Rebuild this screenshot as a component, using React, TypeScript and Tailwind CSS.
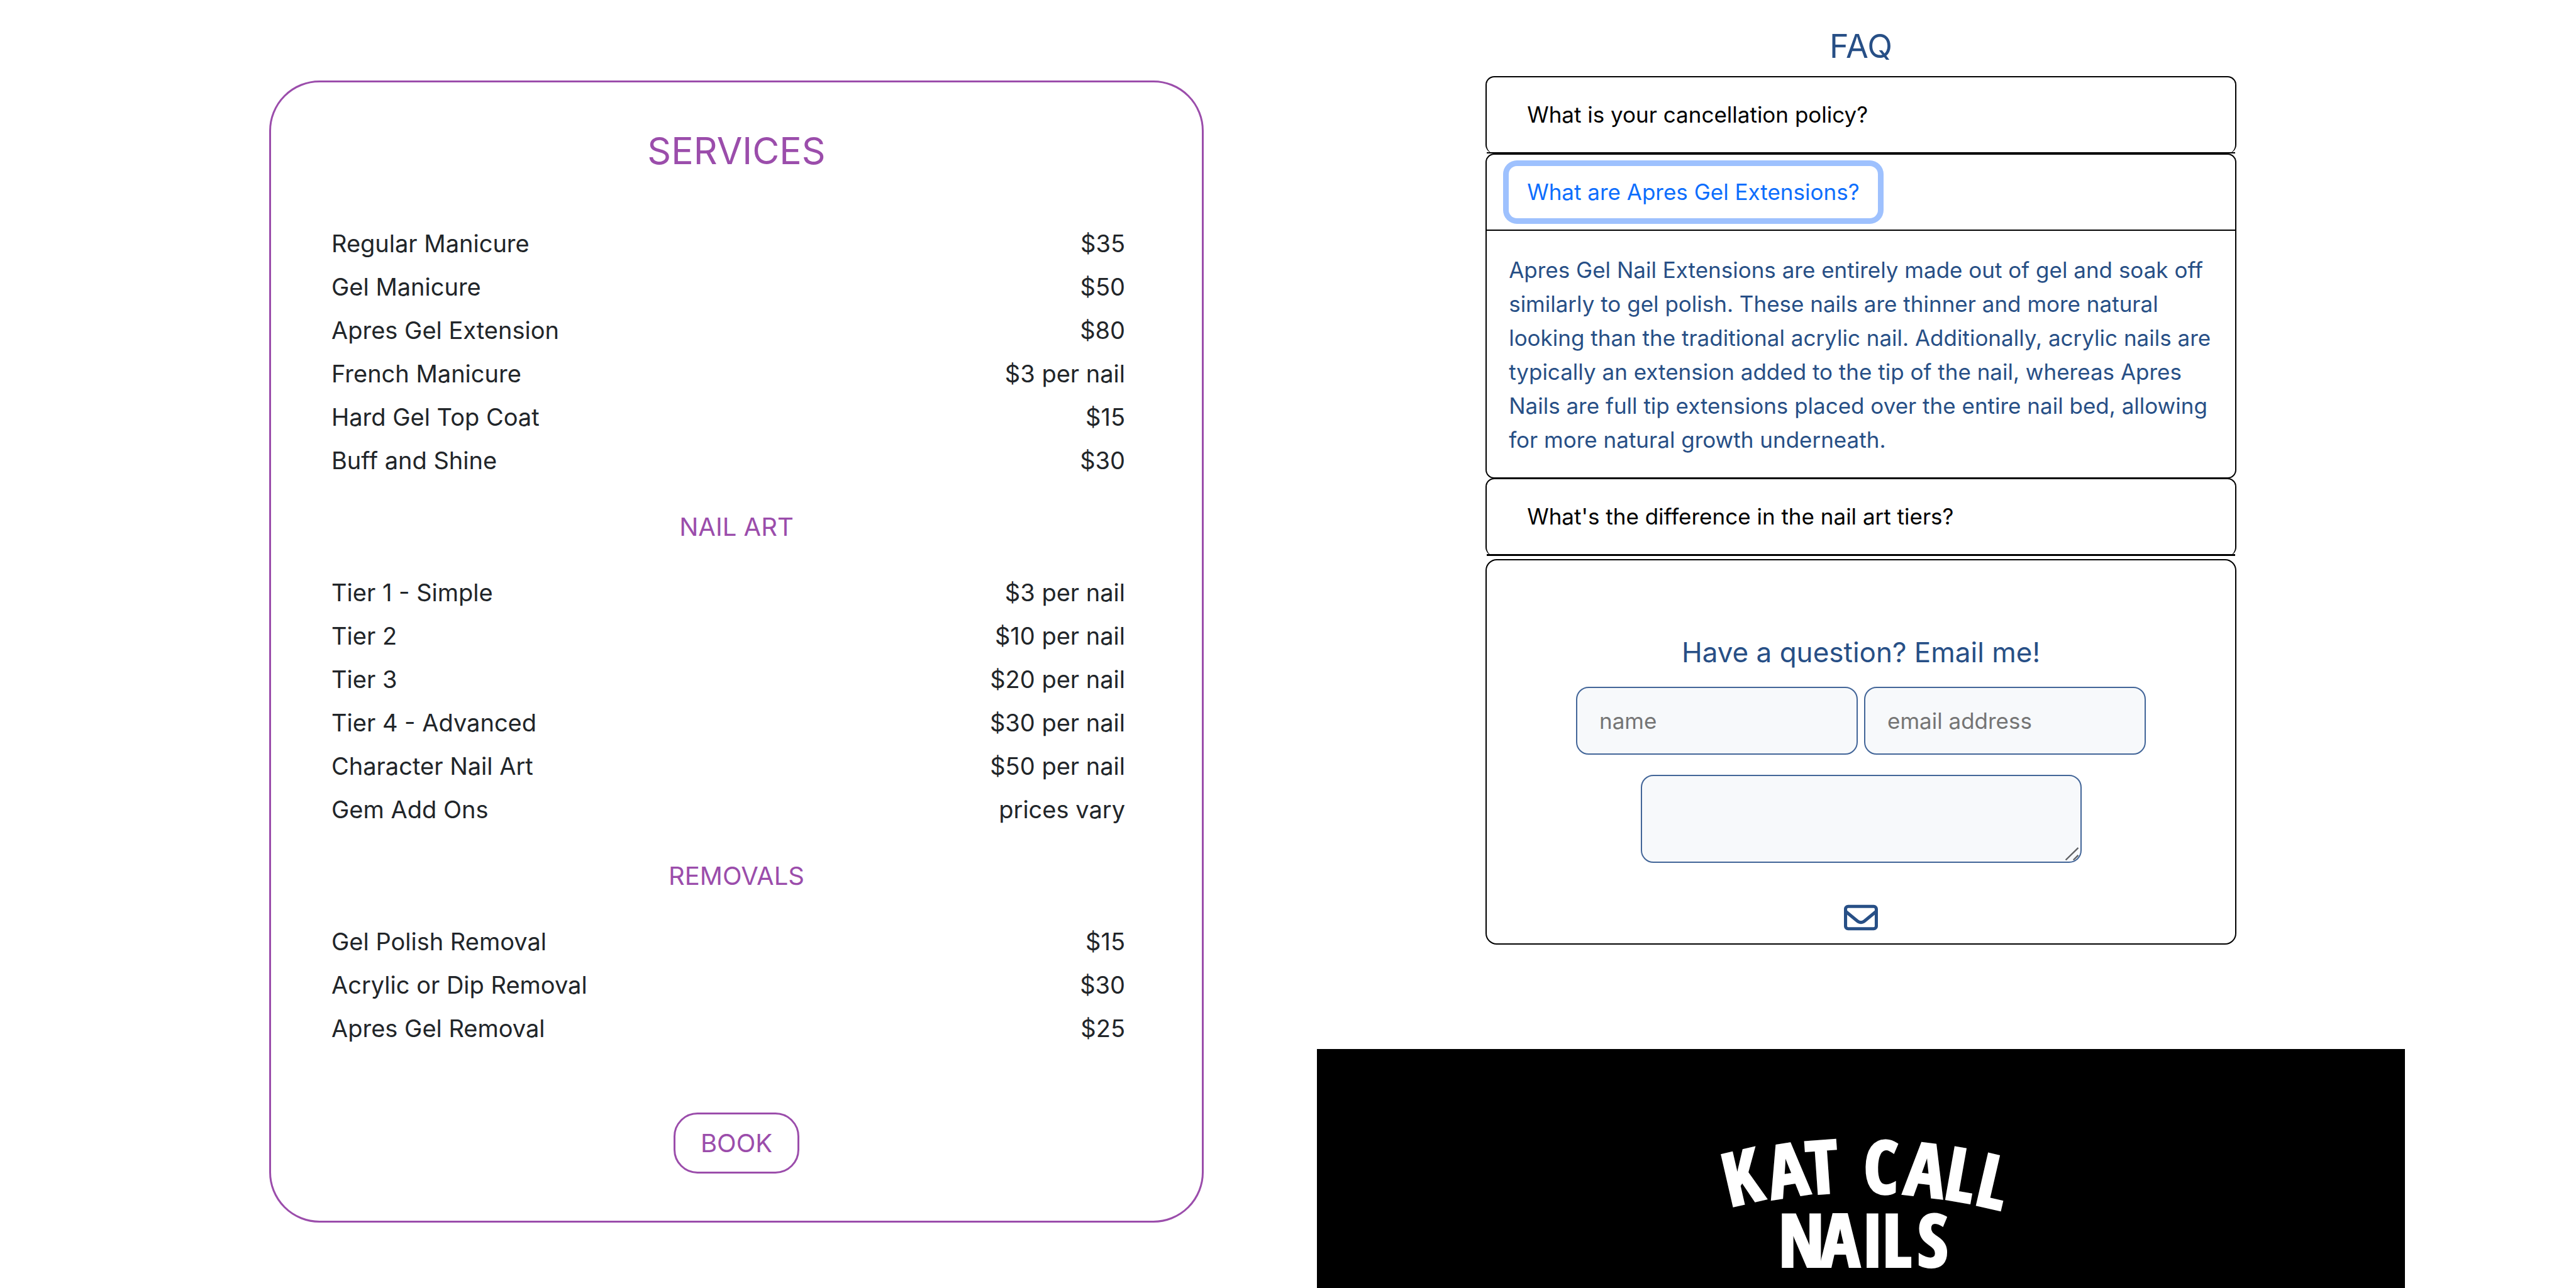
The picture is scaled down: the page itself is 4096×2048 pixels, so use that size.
import { useId, useState } from "react";
import type { ReactNode } from "react";
import { FaRegEnvelope } from "react-icons/fa6";

type Service = { name: string; price: string };

const manicures: Service[] = [
  { name: "Regular Manicure", price: "$35" },
  { name: "Gel Manicure", price: "$50" },
  { name: "Apres Gel Extension", price: "$80" },
  { name: "French Manicure", price: "$3 per nail" },
  { name: "Hard Gel Top Coat", price: "$15" },
  { name: "Buff and Shine", price: "$30" },
];

const nailArt: Service[] = [
  { name: "Tier 1 - Simple", price: "$3 per nail" },
  { name: "Tier 2", price: "$10 per nail" },
  { name: "Tier 3", price: "$20 per nail" },
  { name: "Tier 4 - Advanced", price: "$30 per nail" },
  { name: "Character Nail Art", price: "$50 per nail" },
  { name: "Gem Add Ons", price: "prices vary" },
];

const removals: Service[] = [
  { name: "Gel Polish Removal", price: "$15" },
  { name: "Acrylic or Dip Removal", price: "$30" },
  { name: "Apres Gel Removal", price: "$25" },
];

function ServiceList({ items }: { items: Service[] }) {
  return (
    <ul className="pl-24 pr-[122px] text-[38px] leading-[69px] text-[#212529]">
      {items.map((item) => (
        <li key={item.name} className="flex justify-between">
          <span>{item.name}</span>
          <span>{item.price}</span>
        </li>
      ))}
    </ul>
  );
}

function SectionTitle({ children }: { children: ReactNode }) {
  return (
    <h3 className="my-9 text-center text-[40px] leading-[69px] text-[#9b4dab]">{children}</h3>
  );
}

function ServicesCard() {
  return (
    <section className="mt-[128px] self-start rounded-[80px] border-3 border-[#9b4dab] pb-[75px] pt-[75px]">
      <h2 className="mb-[79px] text-center text-[59px] leading-[68px] text-[#9b4dab]">SERVICES</h2>
      <ServiceList items={manicures} />
      <SectionTitle>NAIL ART</SectionTitle>
      <ServiceList items={nailArt} />
      <SectionTitle>REMOVALS</SectionTitle>
      <ServiceList items={removals} />
      <div className="mt-[99px] flex justify-center">
        <button
          type="button"
          className="h-[97px] rounded-[38px] border-3 border-[#9b4dab] px-10 text-[40px] text-[#9b4dab]"
        >
          BOOK
        </button>
      </div>
    </section>
  );
}

type ItemProps = {
  question: string;
  open: boolean;
  focused?: boolean;
  className: string;
  headerClass: string;
  onToggle: () => void;
  children?: ReactNode;
};

function FaqItem({ question, open, focused, className, headerClass, onToggle, children }: ItemProps) {
  const id = useId();
  return (
    <div className={`rounded-[14px] border-2 border-black ${className}`}>
      <h3 className={`border-black px-[35px] py-[18px] ${headerClass}`}>
        <button
          type="button"
          aria-expanded={open}
          aria-controls={id}
          onClick={onToggle}
          className={`h-[83px] rounded-[13px] px-[29px] text-[35px] outline-none ${
            focused ? "text-[#0d6efd] shadow-[0_0_0_9px_#9ec1fe]" : "text-black"
          }`}
        >
          {question}
        </button>
      </h3>
      <div id={id} hidden={!open}>
        {children}
      </div>
    </div>
  );
}

function Faq() {
  const [open, setOpen] = useState(1);
  const toggle = (index: number) => setOpen(open === index ? -1 : index);
  return (
    <section className="mx-auto w-[69%] text-[#274f86]">
      <h2 className="pb-[17px] pt-[43px] text-center text-[52px] leading-[61px]">FAQ</h2>
      <FaqItem
        question="What is your cancellation policy?"
        open={open === 0}
        className="border-b-0"
        headerClass="border-b-2"
        onToggle={() => toggle(0)}
      >
        <p className="p-9 text-[35px] leading-[54px]">Please give 24 hours notice.</p>
      </FaqItem>
      <FaqItem
        question="What are Apres Gel Extensions?"
        open={open === 1}
        focused={open === 1}
        className=""
        headerClass="border-b-2"
        onToggle={() => toggle(1)}
      >
        <p className="px-[35px] pb-[33px] pt-[35px] text-[35px] leading-[54px]">
          Apres Gel Nail Extensions are entirely made out of gel and soak off similarly to gel polish. These
          nails are thinner and more natural looking than the traditional acrylic nail. Additionally, acrylic
          nails are typically an extension added to the tip of the nail, whereas Apres Nails are full tip
          extensions placed over the entire nail bed, allowing for more natural growth underneath.
        </p>
      </FaqItem>
      <FaqItem
        question="What's the difference in the nail art tiers?"
        open={open === 2}
        className="-mt-px border-b-0"
        headerClass="border-b-3"
        onToggle={() => toggle(2)}
      >
        <p className="p-9 text-[35px] leading-[54px]">Each tier adds more detail.</p>
      </FaqItem>
      <ContactForm />
    </section>
  );
}

function ContactForm() {
  return (
    <form
      className="mt-[5px] flex flex-col items-center rounded-[18px] border-2 border-black pb-[14px] pt-[120px]"
      onSubmit={(event) => event.preventDefault()}
    >
      <h3 className="mb-7 text-[44px] leading-[53px]">Have a question? Email me!</h3>
      <div className="flex gap-[10px]">
        <input
          type="text"
          aria-label="name"
          placeholder="name"
          className="h-[108px] w-[448px] rounded-[20px] border-2 border-[#426598] bg-[#f7f9fb] px-[35px] text-[35px] placeholder:text-[#757575]"
        />
        <input
          type="email"
          aria-label="email address"
          placeholder="email address"
          className="h-[108px] w-[448px] rounded-[20px] border-2 border-[#426598] bg-[#f7f9fb] px-[35px] text-[35px] placeholder:text-[#757575]"
        />
      </div>
      <div className="relative mt-8 flex">
        <textarea
          aria-label="message"
          className="h-[140px] w-[701px] resize-none rounded-[20px] border-2 border-[#426598] bg-[#f7f9fb] p-[35px] text-[35px]"
        />
        <svg
          className="absolute bottom-[3px] right-[3px] size-6"
          viewBox="0 0 24 24"
          fill="none"
          stroke="#5f6164"
          strokeWidth="2.4"
          aria-hidden="true"
        >
          <path d="M1.6 22.5 21.5 3M13.8 22.5 21.5 14.8" />
        </svg>
      </div>
      <button type="submit" aria-label="Send" className="mt-[60px]">
        <FaRegEnvelope className="size-[54px]" />
      </button>
    </form>
  );
}

function Logo() {
  return (
    <svg
      className="mx-auto h-[300px] w-[593px] fill-white stroke-white stroke-4 font-['Liberation_Sans_Narrow','Open_Sans_Condensed','Roboto_Condensed','DejaVu_Sans_Condensed',sans-serif] text-[116px] font-extrabold"
      viewBox="0 0 593 300"
      role="img"
      aria-label="Kat Call Nails"
    >
      <text x="87 155 212 250 300 363 425 474" y="165 153 145 145 143 144 151 160" rotate="-13 -9 -4 0 1 7 10 13">
        KAT CALL
      </text>
      <text x="165 232 297 330 386" y="260">
        NAILS
      </text>
    </svg>
  );
}

export default function App() {
  return (
    <div className="grid min-h-screen grid-cols-[1486fr_1730fr] gap-x-[180px] bg-white pl-[428px] pr-[272px] font-['Inter','Liberation_Sans',sans-serif]">
      <ServicesCard />
      <div className="flex h-screen flex-col">
        <Faq />
        <footer className="mt-[166px] grow overflow-hidden bg-black pt-[86px]">
          <Logo />
        </footer>
      </div>
    </div>
  );
}
